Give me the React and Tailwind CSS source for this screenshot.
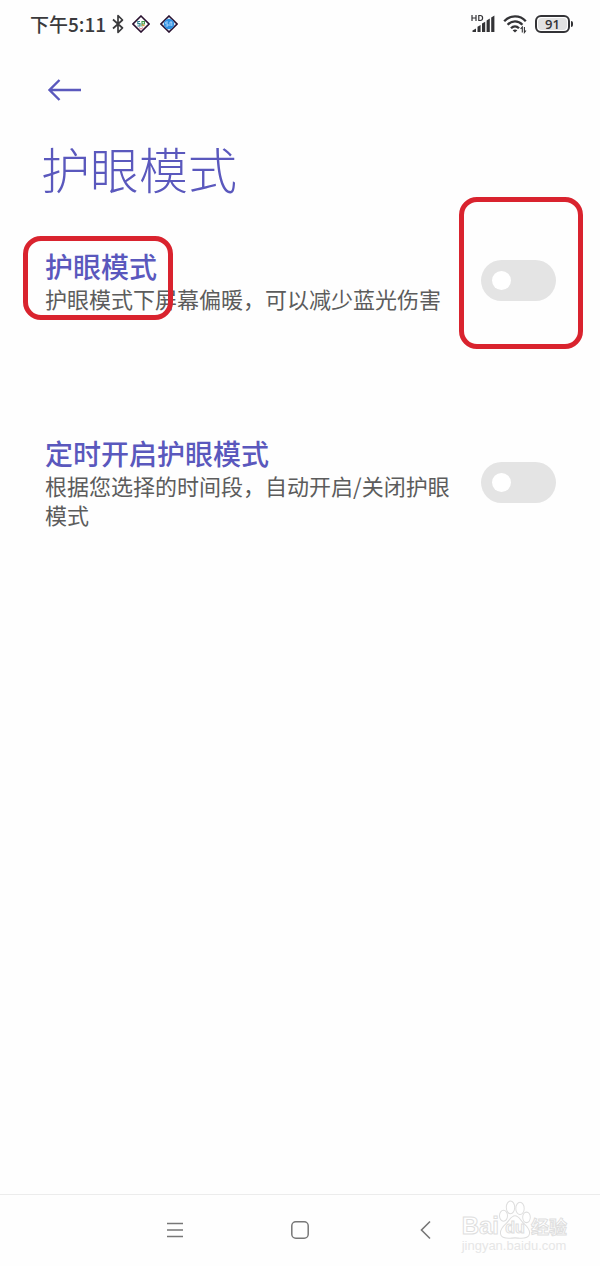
import React, { useState } from 'react';

const settings = [
  {
    id: 'eye-care',
    title: '护眼模式',
    description: '护眼模式下屏幕偏暖，可以减少蓝光伤害',
    highlighted: true,
  },
  {
    id: 'eye-care-schedule',
    title: '定时开启护眼模式',
    description: '根据您选择的时间段，自动开启/关闭护眼模式',
    highlighted: false,
  },
];

const BluetoothIcon = () => (
  <svg className="w-3 h-5" viewBox="0 0 12 20" fill="none" stroke="#3a3a3c" strokeWidth="1.7">
    <path d="M1 5.5 L10.5 14 L6 18.3 V1.7 L10.5 6 L1 14.5" strokeLinejoin="round" />
  </svg>
);

const BadgeIcon = ({ blue }) => (
  <svg className="w-[18px] h-[18px]" viewBox="0 0 18 18" fill="none">
    <path d="M9 1 L17 9 L9 17 L1 9 Z" fill={blue ? '#eaf5ff' : '#fff'} stroke="#2a1230" strokeWidth="1.6" />
    {blue ? (
      <>
        <circle cx="9" cy="9" r="5.2" fill="#2f8fe0" />
        <path d="M8 7 H5.8 V9 H8 V11 H5.6 M10 7 V11 M11.8 7 V11 M10 7 H12" stroke="#b5dcff" strokeWidth="0.9" />
      </>
    ) : (
      <>
        <path d="M8 6.5 H5.8 V8.6 H8 V11 H5.4" stroke="#2f7f8f" strokeWidth="1.1" />
        <path d="M10 11.5 V6.5 H12.4 V9 H10" stroke="#3b9a45" strokeWidth="1.1" />
        <path d="M10 9.5 L12.5 11" stroke="#e08a2c" strokeWidth="1.1" />
        <path d="M7 12.5 L9 14.2 L11 12.5" stroke="#d9536b" strokeWidth="0.9" />
      </>
    )}
  </svg>
);

// bars are slanted at the top, the shortest one ends in a point
const SignalIcon = () => (
  <svg className="w-6 h-5" viewBox="0 0 24 20" fill="#333336">
    <path
      d="M1 1 V7 M5 1 V7 M1 4 H5 M7.8 1.5 H9.2 Q11.6 1.5 11.6 4 Q11.6 6.5 9.2 6.5 H7.8 Z"
      fill="none"
      stroke="#333336"
      strokeWidth="1.2"
    />
    <path d="M1.5 18 V16.4 L5 14.4 V18 Z" />
    <path d="M6.5 18 V12.8 L9.6 11 V18 Z" />
    <path d="M11 18 V9.6 L14.2 7.8 V18 Z" />
    <path d="M15.6 18 V6.4 L18.8 4.6 V18 Z" />
    <path d="M20.2 18 V3.4 L23.4 1.6 V18 Z" />
  </svg>
);

const WifiIcon = () => (
  <svg className="w-6 h-5" viewBox="0 0 24 20" fill="none" stroke="#333336">
    <path d="M1.2 7.2 C7 0.8 17 0.8 22.8 7.2" strokeWidth="2.3" />
    <path d="M4.6 10.8 C8.8 6.3 15.2 6.3 19.4 10.8" strokeWidth="2.3" />
    <path d="M8 14.2 C10.4 11.7 13.6 11.7 16 14.2" strokeWidth="2.3" />
    <path d="M9.6 16.2 Q12 14.6 14.4 16.2 L12 18.6 Z" fill="#333336" stroke="none" />
    <path d="M19.3 18.5 V13 L17.6 15 M21.4 13 V18.5 L23 16.5" strokeWidth="1.1" />
  </svg>
);

const Battery = ({ level }) => (
  <div className="flex items-center">
    <div className="w-[35px] h-[18px] rounded-md border-2 border-[#333336] p-px">
      <div className="h-full rounded-sm bg-[#e2e2e2] flex items-center justify-center font-['Open_Sans',sans-serif] text-[13px] leading-none font-semibold text-[#333336]">
        {level}
      </div>
    </div>
    <div className="w-0.5 h-1.5 ml-px rounded-r-sm bg-[#333336]"></div>
  </div>
);

const StatusBar = () => (
  <header className="h-12 pl-[30px] pr-[27px] flex items-center justify-between text-[#3a3a3c]">
    <div className="flex items-center">
      <span className="text-[19px] font-medium mr-1.5">下午5:11</span>
      <BluetoothIcon />
      <span className="flex gap-2.5 ml-2">
        <BadgeIcon />
        <BadgeIcon blue />
      </span>
    </div>
    <div className="flex items-center gap-2">
      <SignalIcon />
      <WifiIcon />
      <Battery level={91} />
    </div>
  </header>
);

const SettingRow = ({ setting, checked, onChange }) => {
  const { id, title, description, highlighted } = setting;

  return (
    <div className="flex items-center justify-between gap-4">
      <div className="relative flex-1">
        <label htmlFor={id} className="block text-[28px] leading-9 font-medium text-[#5a58bd]">
          {title}
        </label>
        <p id={`${id}-description`} className="text-[22px] leading-[29px] text-[#5c5c5c]">
          {description}
        </p>
        {highlighted && (
          <div className="absolute -top-3 -left-[22px] w-[150px] h-[84px] rounded-[18px] border-5 border-[#d9232e] pointer-events-none"></div>
        )}
      </div>
      <div className="relative flex shrink-0">
        <input
          id={id}
          type="checkbox"
          role="switch"
          aria-describedby={`${id}-description`}
          checked={checked}
          onChange={onChange}
          className="appearance-none w-[75px] h-[41px] px-[11px] rounded-full bg-[#e4e4e4] checked:bg-[#5a58bd] flex items-center checked:justify-end before:block before:size-[19px] before:rounded-full before:bg-white"
        />
        {highlighted && (
          <div className="absolute -top-[63px] -left-[22px] w-[124px] h-[152px] rounded-[18px] border-5 border-[#d9232e] pointer-events-none"></div>
        )}
      </div>
    </div>
  );
};

const NavBar = () => (
  <nav className="h-[72px] border-t border-[#ececec] pb-0.5 flex items-center justify-center gap-[93px]">
    <button type="button" aria-label="菜单" className="w-8 h-8 flex items-center justify-center">
      <svg className="w-5 h-5" viewBox="0 0 20 20" stroke="#777" strokeWidth="1.5">
        <path d="M2 3.5 H18 M2 10 H18 M2 16.5 H18" />
      </svg>
    </button>
    <button type="button" aria-label="主页" className="w-8 h-8 flex items-center justify-center">
      <svg className="w-5 h-5" viewBox="0 0 20 20" fill="none" stroke="#777" strokeWidth="1.5">
        <rect x="1.8" y="1.8" width="16.4" height="16.4" rx="4" />
      </svg>
    </button>
    <button type="button" aria-label="返回" className="w-8 h-8 flex items-center justify-center">
      <svg className="w-5 h-5" viewBox="0 0 20 20" fill="none" stroke="#777" strokeWidth="1.6">
        <path d="M15 1.5 L6.5 10 L15 18.5" />
      </svg>
    </button>
  </nav>
);

const Watermark = () => (
  <div className="absolute right-[33px] bottom-3.5 pointer-events-none text-white [-webkit-text-stroke:1px_#dedede] font-bold">
    <div className="flex items-end h-10">
      <span className="text-[24px] leading-7 font-['Liberation_Sans',sans-serif]">Bai</span>
      <span className="relative w-8 h-10 flex items-end justify-center">
        <svg className="absolute inset-0 w-8 h-10" viewBox="0 0 32 38" fill="#fff" stroke="#dedede" preserveAspectRatio="none">
          <ellipse cx="4.5" cy="15" rx="4" ry="5.2" />
          <ellipse cx="11.5" cy="7" rx="4.2" ry="6" />
          <ellipse cx="21" cy="8" rx="4.2" ry="5.8" />
          <ellipse cx="27.5" cy="16.5" rx="3.8" ry="5" />
          <path d="M16 15 C20 15 21.5 19.5 25 22.5 C29 26 32 29.5 30 33.5 C27.5 38 20 36 16 36 C12 36 4.5 38 2 33.5 C0 29.5 3 26 7 22.5 C10.5 19.5 12 15 16 15 Z" />
        </svg>
        <span className="relative text-[16px] leading-6 font-['Liberation_Sans',sans-serif]">du</span>
      </span>
      <span className="text-[18px] leading-7">经验</span>
    </div>
    <div className="text-[13px] leading-3 font-normal font-['Liberation_Sans',sans-serif] text-[#e6e6e6] [-webkit-text-stroke:0]">
      jingyan.baidu.com
    </div>
  </div>
);

const App = () => {
  const [enabled, setEnabled] = useState({});

  const toggle = (id) => {
    setEnabled((prev) => ({ ...prev, [id]: !prev[id] }));
  };

  return (
    <div className="relative min-h-screen flex flex-col bg-[#fefefe] font-['Noto_Sans_CJK_SC',sans-serif]">
      <StatusBar />
      <main className="flex-1 pl-[45px] pr-11">
        <button type="button" aria-label="返回上一页" className="block mt-[30px]">
          <svg className="w-10 h-6" viewBox="0 0 40 24" fill="none" stroke="#5a58bd" strokeWidth="2.4">
            <path d="M14.5 2 L4.5 12 L14.5 22 M4.5 12 H36" />
          </svg>
        </button>
        <h1 className="-ml-1 mt-9 text-[49px] leading-[60px] font-light text-[#5a58bd]">护眼模式</h1>
        <div className="mt-[50px] flex flex-col gap-[122px]">
          {settings.map((setting) => (
            <SettingRow
              key={setting.id}
              setting={setting}
              checked={!!enabled[setting.id]}
              onChange={() => toggle(setting.id)}
            />
          ))}
        </div>
      </main>
      <NavBar />
      <Watermark />
    </div>
  );
};

export default App;
